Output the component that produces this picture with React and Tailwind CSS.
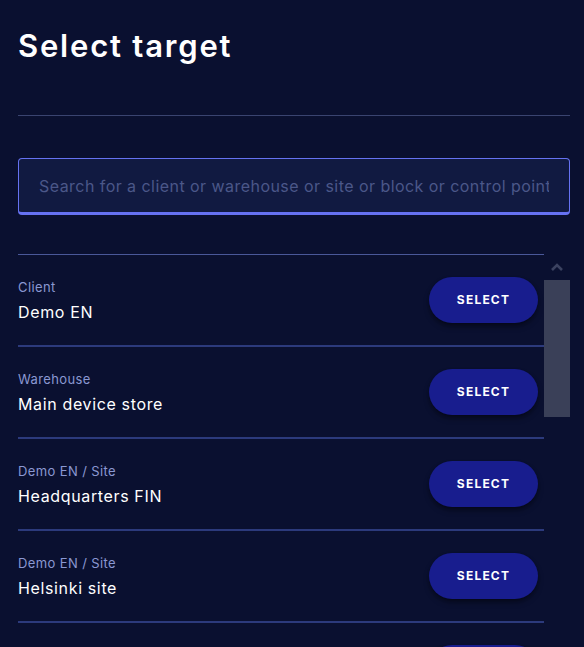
import { useState } from "react";

const targets = [
  { kind: "Client", name: "Demo EN" },
  { kind: "Warehouse", name: "Main device store" },
  { kind: "Demo EN / Site", name: "Headquarters FIN" },
  { kind: "Demo EN / Site", name: "Helsinki site" },
  { kind: "Demo EN / Site", name: "Tampere site" },
];

function TargetRow({ kind, name }) {
  return (
    <div className="flex h-[92px] shrink-0 items-center justify-between border-b-2 border-[#2c3a7c]">
      <div className="flex flex-col pt-[1px]">
        <span className="text-[13px] leading-[18px] tracking-[0.03em] text-[#8a98d2]">{kind}</span>
        <span className="mt-[5px] text-[16px] leading-[22px] tracking-[0.04em] text-white">{name}</span>
      </div>
      <button
        type="button"
        className="mr-[6px] h-[46px] w-[109px] rounded-full bg-[#181d8e] text-[12px] font-bold tracking-[0.1em] text-white shadow-md shadow-black/40 hover:bg-[#2028a8]"
      >
        SELECT
      </button>
    </div>
  );
}

export default function App() {
  const [query, setQuery] = useState("");

  return (
    <div className="h-[647px] w-[584px] overflow-hidden bg-[#0a1030] pl-[18px] pr-[14px] pt-[28px] font-['Inter',sans-serif] text-white">
      <h1 className="text-[31px] font-semibold leading-[36px] tracking-[1.8px]">Select target</h1>

      <div className="mt-[51px] h-px bg-[#3a4470]" />

      <div className="mt-[42px] flex h-[57px] items-center rounded-[4px] border border-b-[3px] border-[#6672f2] bg-[#111a41] pl-[20px] pr-[20px]">
        <input
          autoFocus
          value={query}
          onChange={(e) => setQuery(e.target.value)}
          placeholder="Search for a client or warehouse or site or block or control point"
          className="w-full bg-transparent text-[16px] tracking-[0.45px] text-white caret-white outline-none placeholder:text-[#4b5789]"
        />
      </div>

      <div className="mt-[39px] flex">
        <div className="flex flex-1 flex-col border-t border-[#4a5899]">
          {targets.map((t, i) => (
            <TargetRow key={i} {...t} />
          ))}
        </div>

        <div className="flex w-[26px] flex-col items-center">
          <svg width="14" height="10" viewBox="0 0 14 10" className="mt-[8px]">
            <path d="M2 8 L7 3 L12 8" fill="none" stroke="#3b4260" strokeWidth="2.6" />
          </svg>
          <div className="mt-[8px] h-[137px] w-full bg-[#3a4058]" />
        </div>
      </div>
    </div>
  );
}
